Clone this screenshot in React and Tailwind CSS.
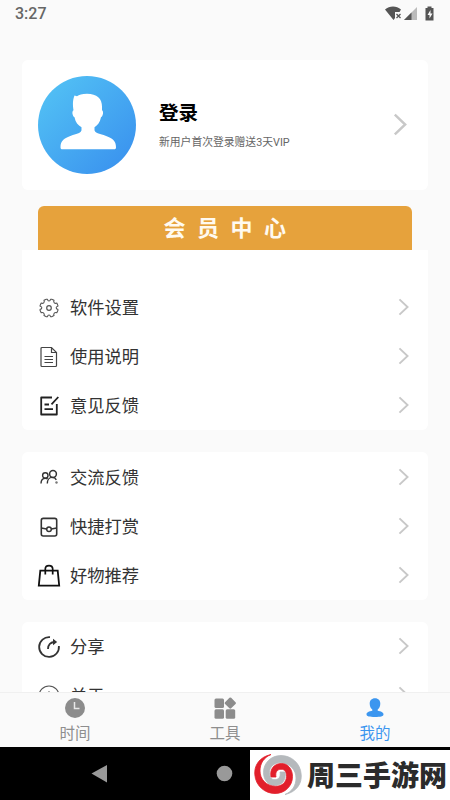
const IconBox = ({ children, className = '' }) => (
  <svg viewBox="0 0 24 24" fill="none" stroke="#333" strokeWidth="1.3" className={`w-6 h-6 shrink-0 ${className}`}>
    {children}
  </svg>
)

const SettingsIcon = () => (
  <IconBox>
    <path
      d="M9.300 3.200h1.200c.3 2.300 2.700 2.300 3 0h1.200l2.300 1c-.9 2.200.7 3.700 2.800 2.900l1.100 2.300v.9c-2.300.4-2.300 2.700 0 3.100v1.100l-1.100 2.300c-2.100-.9-3.700.7-2.800 2.800l-2.300 1.100h-1.200c-.3-2.300-2.700-2.300-3 0H9.300L7 19.600c.9-2.100-.7-3.700-2.800-2.800l-1.100-2.300v-1.100c2.300-.4 2.300-2.700 0-3.100v-.9l1.100-2.300c2.100.8 3.700-.7 2.800-2.900z"
      stroke="#555"
      strokeWidth="1.1"
      strokeLinejoin="round"
    />
    <circle cx="12" cy="12" r="2.300" stroke="#555" strokeWidth="1.2" />
  </IconBox>
)

const DocIcon = () => (
  <IconBox>
    <path d="M5 2.500h9.500l5 5v13a1 1 0 0 1-1 1H5a1 1 0 0 1-1-1v-17a1 1 0 0 1 1-1z M14.500 2.500v5h5" stroke="#444" strokeWidth="1.2" />
    <path d="M7.500 11.500H16M7.500 14.500H16M7.500 17.500H16" stroke="#444" strokeWidth="1.2" />
  </IconBox>
)

const EditIcon = () => (
  <IconBox>
    <path d="M15 3.500H4.200v17h15.600V10" stroke="#222" strokeWidth="1.8" strokeLinejoin="round" />
    <path d="M21.300 3l-6.800 7.300M7.500 10.500h4.500M7.500 15.200h8.500" stroke="#222" strokeWidth="1.8" />
  </IconBox>
)

const PeopleIcon = () => (
  <IconBox>
    <circle cx="8.300" cy="9.500" r="2.700" strokeWidth="1.4" />
    <circle cx="16" cy="8" r="3.400" strokeWidth="1.5" />
    <path
      d="M4 17.500c0-3.400 1.800-5.300 4.300-5.300 1 0 1.700.2 2.300.7M10.300 17.500c0-3.600 2-6.100 5-6.100 1.900 0 3.300 1 4 2.500"
      strokeWidth="1.4"
    />
    <circle cx="19.500" cy="16.500" r="1.200" fill="#777" stroke="none" />
  </IconBox>
)

const RewardIcon = () => (
  <IconBox>
    <rect x="4.300" y="3.400" width="15.400" height="17.600" rx="2" strokeWidth="1.6" />
    <path d="M4.300 13l5.300 1M14.400 14l5.300-1" strokeWidth="1.500" />
    <circle cx="12" cy="14.200" r="2.300" strokeWidth="1.500" />
  </IconBox>
)

const BagIcon = () => (
  <IconBox>
    <path d="M3.300 6.700h17.400l1.500 15H1.800z" stroke="#111" strokeWidth="1.800" />
    <path d="M8.300 10.500V5c0-4.600 7.400-4.600 7.400 0v5.500" stroke="#111" strokeWidth="1.700" />
  </IconBox>
)

const ShareIcon = () => (
  <IconBox>
    <path d="M13 2.200A9.900 9.900 0 1 0 21.900 11" strokeWidth="1.800" />
    <path d="M11 14c0-4.500 2.500-7 7-7" strokeWidth="1.800" />
    <path d="M16 3.800l4.200 3.200-4.200 3.200z" fill="#333" stroke="none" />
  </IconBox>
)

const AboutIcon = () => (
  <IconBox>
    <circle cx="12" cy="12" r="10" stroke="#555" strokeWidth="1.200" />
    <path d="M12 7.200v1.600M12 11v6" stroke="#555" strokeWidth="1.200" />
  </IconBox>
)

const Arrow = ({ className }) => (
  <svg viewBox="0 0 12 20" fill="none" stroke="#c8c8c8" strokeWidth="2.1" className={className}>
    <path d="M1.500 1.500L10.500 10l-9 8.500" />
  </svg>
)

const Row = ({ icon: Icon, label }) => (
  <button className="flex items-center w-full h-[49px] pl-[15px] pr-[19px] text-left">
    <Icon />
    <span className="ml-[9px] flex-1 text-[17.3px] leading-6 text-[#333]">{label}</span>
    <Arrow className="w-[11px] h-[18px] mb-px" />
  </button>
)

const groups = [
  [
    { icon: SettingsIcon, label: '软件设置' },
    { icon: DocIcon, label: '使用说明' },
    { icon: EditIcon, label: '意见反馈' },
  ],
  [
    { icon: PeopleIcon, label: '交流反馈' },
    { icon: RewardIcon, label: '快捷打赏' },
    { icon: BagIcon, label: '好物推荐' },
  ],
  [
    { icon: ShareIcon, label: '分享' },
    { icon: AboutIcon, label: '关于' },
  ],
]

const StatusBar = () => (
  <header className="flex items-center justify-between h-7 pl-[15px] pr-[15px] shrink-0 text-[#666]">
    <span className="text-[16px] leading-7 font-medium">3:27</span>
    <svg width="50" height="16" viewBox="0 0 50 16" fill="#555">
      <path d="M0 3.500C4.500-.5 11.500-.5 16 3.500L14.500 6H10V12L8.500 14z" />
      <path d="M11.500 8l4 4M15.500 8l-4 4" stroke="#555" strokeWidth="1.300" />
      <path d="M32 1v13H19z" fill="#bbb" />
      <path d="M26.500 6.500V14H19z" />
      <path d="M42.500 0.500h4V2H48.500v12.500h-8V2h2z" />
      <path d="M45.500 4l-3 5h2v3.500l3-5h-2z" fill="#fafafa" />
    </svg>
  </header>
)

const Avatar = () => (
  <svg viewBox="0 0 98 98" className="w-[98px] h-[98px] shrink-0">
    <defs>
      <linearGradient id="avatarFill" x1="0" y1="0" x2="1" y2="1">
        <stop offset="0.150" stopColor="#50bdf4" />
        <stop offset="0.850" stopColor="#3c96ef" />
      </linearGradient>
    </defs>
    <circle cx="49" cy="49" r="49" fill="url(#avatarFill)" />
    <path
      d="M36.500 19.500l2.500.8c2-1.600 5-2.500 10-2.500 10 0 15 5 15 13v3.500c2 1 1 6-1 7-1 5-3.500 8-6.500 10v3c1 3.500 6 3.500 11 5.500 7 2.500 10.500 5 10.500 11.500 0 1.500-.5 2-2 2H24.500c-1.500 0-2-.5-2-2 0-6.500 3.500-9 10.500-11.500 5-2 9.500-2 10.500-5.500v-3c-3.500-2-6-5-7-10-2-1-3-6-1-7-.6-5-1.200-9 1-14.800z"
      fill="#fff"
    />
  </svg>
)

const TabBar = () => (
  <nav className="grid grid-cols-3 h-[55px] shrink-0 bg-[#fafafa] border-t border-[#f0f0f0] text-[15.500px] text-[#8e8e8e]">
    <div className="flex flex-col items-center pt-[4px]">
      <svg width="22" height="22" viewBox="0 0 22 22">
        <circle cx="11" cy="11" r="10" fill="#8c8c8c" />
        <path d="M10.500 5v6.500h5" fill="none" stroke="#e8e8e8" strokeWidth="1.500" />
      </svg>
      <span className="leading-6 mt-[3px]">时间</span>
    </div>
    <div className="flex flex-col items-center pt-[4px]">
      <svg width="22" height="22" viewBox="0 0 22 22" fill="#8c8c8c">
        <rect x="0.500" y="1.500" width="9.500" height="9.500" rx="1.500" />
        <rect x="0.500" y="12.300" width="9.500" height="9.500" rx="1.500" />
        <rect x="11.700" y="12.300" width="9.500" height="9.500" rx="1.500" />
        <rect x="12" y="1.800" width="8.600" height="8.600" rx="1.200" transform="rotate(45 16.300 6.100)" />
      </svg>
      <span className="leading-6 mt-[3px]">工具</span>
    </div>
    <div className="flex flex-col items-center pt-[4px] text-[#3c96ef]">
      <svg width="22" height="22" viewBox="0 0 22 22" fill="#3c96ef">
        <path d="M11 1.200c3.400 0 5.300 2.300 5.300 5.500 0 2.700-1.100 4.500-2.600 5.700v1.300c3.200.5 5.800 1.500 5.800 3.500 0 2.300-3 2.700-8.500 2.700s-8.500-.4-8.500-2.700c0-2 2.600-3 5.800-3.500v-1.300C6.800 11.200 5.700 9.400 5.700 6.700c0-3.200 1.900-5.500 5.300-5.500z" />
      </svg>
      <span className="leading-6 mt-[3px]">我的</span>
    </div>
  </nav>
)

const swirl =
  'M17 1.500C5 4 0 13 .8 21.500C1.500 33 11 40.500 21 40.500C31 40.500 38.500 33 38.500 23.500C38.500 15 33 10.500 27.500 10.500C20 10.500 15.500 16 17 24L22 24C21 19 23.500 16.300 27 16.300C31 16.300 32.500 19 32.500 23.500C32.500 29 28 33.500 21.500 33.300C12 33 6 26 6 18C6 10 10 4.500 17 1.500z'

const SiteLogo = () => (
  <svg viewBox="0 0 48 44" strokeWidth="0.8" strokeLinejoin="round" className="w-[48px] h-[44px] shrink-0">
    <path d={swirl} fill="#b5b9bc" stroke="#b5b9bc" transform="rotate(180 24 21.500)" />
    <path d={swirl} fill="#e21f2b" stroke="#e21f2b" />
  </svg>
)

export default function App() {
  return (
    <div className="flex flex-col w-[450px] h-[800px] overflow-hidden bg-[#fafafa] font-[Roboto,'Noto_Sans_CJK_SC',sans-serif]">
      <StatusBar />

      <main className="flex-1 min-h-0 overflow-hidden px-[22px] pt-8">
        <section className="flex items-center h-[130px] rounded-md bg-white pl-4 pr-[21px]">
          <Avatar />
          <div className="ml-[23px] flex-1 pt-[3px]">
            <h1 className="text-[19.500px] leading-7 font-bold text-black">登录</h1>
            <p className="mt-[5px] text-[10.800px] leading-5 text-[#666]">新用户首次登录赠送3天VIP</p>
          </div>
          <Arrow className="w-[14px] h-[23px] mb-px" />
        </section>

        <div className="mt-4 mx-4 h-11 rounded-t-md bg-[#e6a23c] flex items-center justify-center text-[22px] leading-[44px] pt-[2px] font-bold text-[#fffaf0] tracking-[11.500px] pl-[11px]">
          会员中心
        </div>

        <section className="h-[180px] rounded-b-md bg-white pt-[33px]">
          {groups[0].map((item) => <Row key={item.label} {...item} />)}
        </section>
        <section className="mt-[22px] h-[148px] rounded-md bg-white pt-px">
          {groups[1].map((item) => <Row key={item.label} {...item} />)}
        </section>
        <section className="mt-[22px] rounded-md bg-white">
          {groups[2].map((item) => <Row key={item.label} {...item} />)}
        </section>
      </main>

      <TabBar />

      <footer className="flex items-end justify-between h-[53px] shrink-0 bg-black">
        <svg width="250" height="53" viewBox="0 0 250 53" fill="#999">
          <path d="M91.500 26.500L107 18v17.500z" />
          <circle cx="224.500" cy="26.500" r="7.800" />
        </svg>
        <div className="flex items-center w-[200px] h-[50px] bg-white pl-[4px] overflow-hidden">
          <SiteLogo />
          <span className="ml-[5px] pt-[3px] text-[28px] leading-[46px] font-black text-[#2b2b2b] whitespace-nowrap">周三手游网</span>
        </div>
      </footer>
    </div>
  )
}
